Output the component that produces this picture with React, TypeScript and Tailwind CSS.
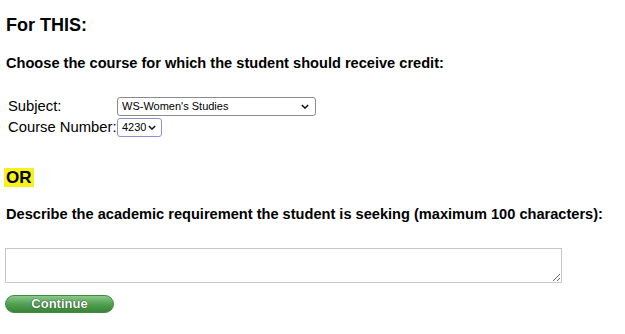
import { useState } from "react";

function Chevron() {
    return (
        <svg viewBox="0 0 10 6" className="h-[5px] w-[8px]" fill="none" stroke="#111" strokeWidth="1.8">
            <path d="M1 1l4 4 4-4" />
        </svg>
    );
}

export default function App() {
    const [subject, setSubject] = useState("WS");
    const [course, setCourse] = useState("4230");
    const [desc, setDesc] = useState("");

    return (
        <div className="min-h-[334px] bg-white px-[6px] text-black" style={{ fontFamily: '"Liberation Sans", Arial, sans-serif' }}>
            {/* Heading */}
            <h3 className="pt-[14px] text-[18px] font-bold leading-[22px]">For THIS:</h3>

            <p className="mt-[19px] text-[14.6px] font-bold leading-[17px]">
                Choose the course for which the student should receive credit:
            </p>

            {/* Course pick */}
            <div className="mt-[25px] ml-[2px] grid grid-cols-[109px_auto] gap-y-[2px] text-[14.8px] leading-[19px]">
                <label className="self-center whitespace-nowrap">Subject:</label>
                <div className="relative w-[199px]">
                    <select
                        value={subject}
                        onChange={(e) => setSubject(e.target.value)}
                        className="block h-[19px] w-full appearance-none rounded-[3px] border border-[#8a8a8a] bg-white pl-[4px] text-[11px] leading-[15px]"
                    >
                        <option value="WS">WS-Women's Studies</option>
                    </select>
                    <span className="pointer-events-none absolute right-[7px] top-[7px] flex">
                        <Chevron />
                    </span>
                </div>
                <label className="self-center whitespace-nowrap">Course Number:</label>
                <div className="relative w-[45px]">
                    <select
                        value={course}
                        onChange={(e) => setCourse(e.target.value)}
                        className="block h-[19px] w-full appearance-none rounded-[3px] border border-[#8f8fd6] bg-white pl-[4px] text-[11px] leading-[15px]"
                    >
                        <option value="4230">4230</option>
                    </select>
                    <span className="pointer-events-none absolute right-[6px] top-[7px] flex">
                        <Chevron />
                    </span>
                </div>
            </div>

            {/* OR */}
            <div className="mt-[29px] -ml-[2px]">
                <span className="bg-[#f7f21a] px-[2px] text-[17px] font-bold leading-[18px]">OR</span>
            </div>

            <p className="mt-[16px] text-[14.6px] font-bold leading-[17px]">
                Describe the academic requirement the student is seeking (maximum 100 characters):
            </p>

            <textarea
                value={desc}
                maxLength={100}
                onChange={(e) => setDesc(e.target.value)}
                className="mt-[25px] block h-[35px] w-[557px] -ml-[1px] border border-[#c8c8c8] bg-white text-[13px]"
            />

            <button className="mt-[12px] -ml-[1px] flex h-[18px] w-[109px] items-center justify-center rounded-full border border-[#3f8a3f] bg-gradient-to-b from-[#8cc88c] via-[#52a052] to-[#388438] text-[13px] font-bold text-white [text-shadow:0_0_1px_#1a421a,0_0_1px_#1a421a]">
                Continue
            </button>
        </div>
    );
}
